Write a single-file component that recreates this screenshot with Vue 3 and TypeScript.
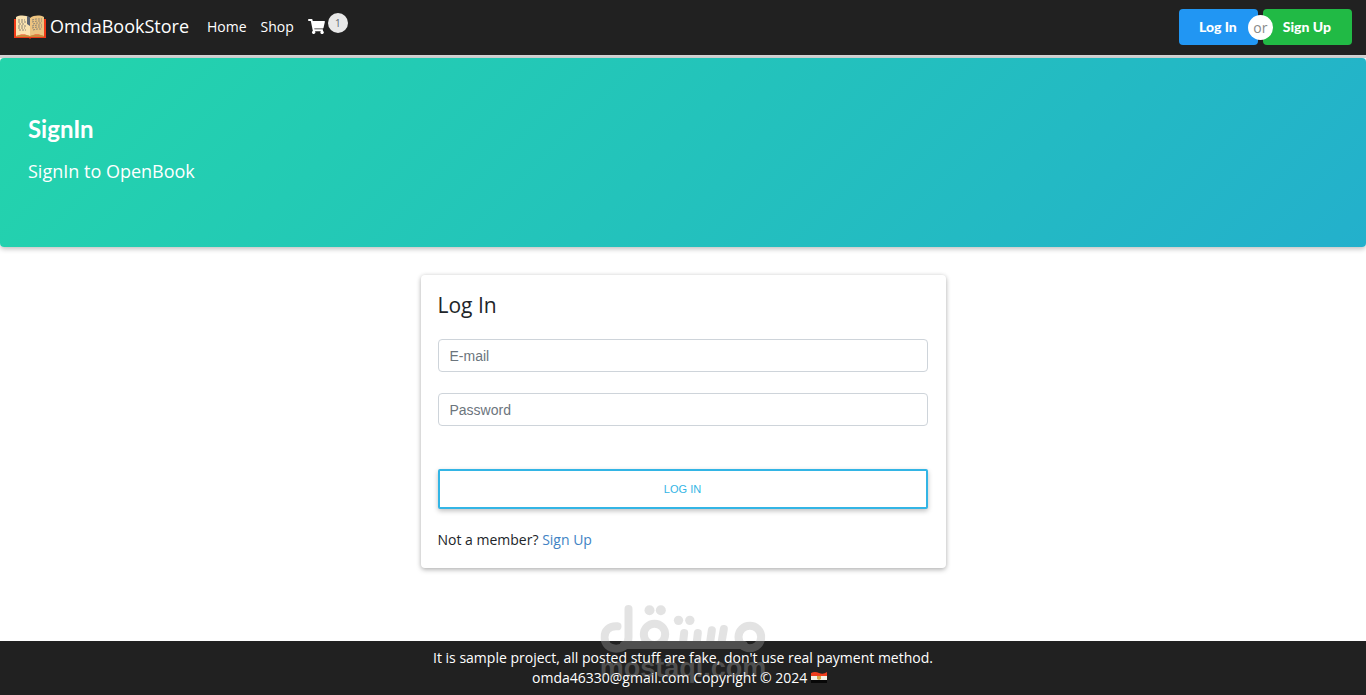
<script setup lang="ts">
import { ref } from 'vue'

const email = ref('')
const password = ref('')
const cartCount = ref(1)
</script>

<template>
  <div class="page">
    <header class="navbar">
      <a class="brand" href="#">
        <svg class="book" viewBox="0 0 32 24" aria-hidden="true">
          <path d="M0 4h32v19H17l-1 1-1-1H0z" fill="#f03a17" />
          <path d="M2 20h28v2H2z" fill="#c98a3c" />
          <path d="M2 2C6 0 12 0 16 3v18c-4-2-10-2-14 0z" fill="#fbe3b0" />
          <path d="M30 2C26 0 20 0 16 3v18c4-2 10-2 14 0z" fill="#edc481" />
          <path d="M13 1c1 0 2 1 3 2v8l-3-2z" fill="#59616f" />
          <path
            d="M4 5h7M4 7h8M5 9h6M4 11h8M4 13h7M5 15h7M18 5l4-1h6M18 7l5-1h5M19 9l4-1h5M18 11l5-1h5M18 13l5-1h5M19 15l4-1h5"
            fill="none" stroke="#8b8374" stroke-width="1" stroke-dasharray="2 1"
          />
        </svg>
        <span>OmdaBookStore</span>
      </a>
      <nav class="links">
        <a href="#">Home</a>
        <a href="#">Shop</a>
        <a class="cart" href="#" aria-label="Cart">
          <svg viewBox="0 0 576 512" aria-hidden="true">
            <path
              fill="currentColor"
              d="M528 301 575 93c4-15-8-29-23-29H159l-9-45C148 8 138 0 126 0H24C11 0 0 11 0 24v16c0 13 11 24 24 24h70l70 343a56 56 0 1 0 67 9h210a56 56 0 1 0 64-10l5-25c4-15-8-29-23-29H218l-7-32h294c11 0 21-8 23-19z"
            />
          </svg>
          <span class="badge">{{ cartCount }}</span>
        </a>
      </nav>
      <div class="auth">
        <button class="btn login" type="button">Log In</button>
        <span class="or">or</span>
        <button class="btn signup" type="button">Sign Up</button>
      </div>
    </header>

    <section class="hero">
      <h1>SignIn</h1>
      <p>SignIn to OpenBook</p>
    </section>

    <main class="content">
      <form class="card" @submit.prevent>
        <h2>Log In</h2>
        <input v-model="email" type="email" placeholder="E-mail" aria-label="E-mail" />
        <input v-model="password" type="password" placeholder="Password" aria-label="Password" />
        <button class="submit" type="submit">LOG IN</button>
        <p class="member">Not a member? <a href="#">Sign Up</a></p>
      </form>
    </main>

    <footer class="footer">
      <p>It is sample project, all posted stuff are fake, don't use real payment method.</p>
      <p>
        omda46330@gmail.com Copyright © 2024
        <svg class="flag" viewBox="0 0 16 11" role="img" aria-label="Egypt">
          <path d="M0 1Q4-1 8 1t8-1v4H0z" fill="#ef3e1d" />
          <path d="M0 4h16v4H0z" fill="#f4f1e6" />
          <path d="M0 8h16v3H0z" fill="#080808" />
          <path d="M6 4h4v3l-2 1-2-1z" fill="#d6a64b" />
        </svg>
      </p>
      <div class="watermark" aria-hidden="true">
        <svg viewBox="0 0 495 150">
          <g fill="none" stroke="currentColor" stroke-width="24" stroke-linecap="round">
            <path d="M51 64C25 62 12 78 12 97c0 21 15 34 35 34 22 0 37-13 37-34V12" />
            <path d="M70 120H430" />
            <circle cx="162" cy="88" r="32" />
            <circle cx="448" cy="96" r="34" />
            <path d="M251 84l-4 34M292 84l-4 34M334 76l-6 42M370 72l-8 46" />
          </g>
          <g fill="currentColor">
            <circle cx="147" cy="16" r="15" />
            <circle cx="181" cy="16" r="15" />
            <circle cx="234" cy="46" r="14" />
            <circle cx="268" cy="46" r="14" />
          </g>
        </svg>
        <span>mostaql.com</span>
      </div>
    </footer>
  </div>
</template>

<style>
body {
  margin: 0;
}
</style>

<style scoped>
* {
  box-sizing: border-box;
}

.page {
  display: flex;
  flex-direction: column;
  min-height: 100vh;
  background: #fff;
  color: #212529;
  font: 14px/20px "Open Sans", sans-serif;
}

h1,
h2,
p {
  margin: 0;
}

a {
  text-decoration: none;
}

.navbar {
  display: flex;
  align-items: center;
  height: 58px;
  padding: 0 14px 2px;
  background: #212121;
  border-bottom: 3px solid #d4d4d5;
}

.navbar a {
  color: #fff;
}

.brand {
  display: flex;
  align-items: center;
  gap: 4px;
  font-size: 18px;
  line-height: 24px;
}

.brand span {
  padding-bottom: 2px;
}

.book {
  width: 32px;
  height: 24px;
}

.links {
  display: flex;
  align-items: center;
  gap: 14px;
  margin-left: 18px;
}

.cart {
  display: flex;
  align-items: center;
  gap: 3px;
}

.cart svg {
  width: 17px;
  height: 15px;
}

.badge {
  width: 20px;
  height: 20px;
  margin-bottom: 8px;
  border-radius: 50%;
  background: #e8e8e8;
  color: #5c6670;
  font-size: 10px;
  line-height: 20px;
  text-align: center;
}

.auth {
  display: flex;
  position: relative;
  gap: 5px;
  margin-left: auto;
}

.btn {
  height: 36px;
  padding: 0 21px 0 20px;
  border: 0;
  border-radius: 4px;
  color: #fff;
  font: 900 14px/20px Lato, sans-serif;
  cursor: pointer;
}

.login {
  background: #2196f3;
}

.signup {
  background: #21ba45;
}

.or {
  position: absolute;
  top: 6px;
  left: 69px;
  width: 25px;
  height: 25px;
  border-radius: 50%;
  background: #fff;
  color: #8a8a8a;
  line-height: 26px;
  text-align: center;
}

.hero {
  padding: 56px 28px 64px;
  border-radius: 4px;
  background: linear-gradient(135deg, #23d5ab, #23b0cc);
  box-shadow: 0 2px 5px rgba(0, 0, 0, 0.25);
  color: #fff;
}

.hero h1 {
  font: 700 24px/30px Lato, sans-serif;
}

.hero p {
  margin-top: 15px;
  font-size: 18px;
  line-height: 24px;
}

.content {
  display: flex;
  justify-content: center;
  flex: 1;
  padding: 28px 16px;
}

.card {
  display: flex;
  flex-direction: column;
  align-self: flex-start;
  width: 100%;
  max-width: 525px;
  padding: 16px 18px 18px 17px;
  border-radius: 4px;
  box-shadow: 0 2px 5px rgba(0, 0, 0, 0.25), 0 0 4px rgba(0, 0, 0, 0.1);
}

.card h2 {
  margin-bottom: 20px;
  font-size: 21px;
  font-weight: 400;
  line-height: 28px;
}

.card input {
  height: 33px;
  margin-bottom: 21px;
  padding: 0 11px;
  border: 1px solid #ced4da;
  border-radius: 4px;
  background: #fff;
  font: 14px/20px "Liberation Sans", Arial, sans-serif;
}

.card input::placeholder {
  color: #6c757d;
  opacity: 1;
}

.submit {
  height: 40px;
  margin-top: 22px;
  border: 2px solid #33b5e5;
  border-radius: 2px;
  background: #fff;
  box-shadow: 0 2px 5px rgba(0, 0, 0, 0.25);
  color: #33b5e5;
  font: 500 11px/20px "Liberation Sans", Arial, sans-serif;
  cursor: pointer;
}

.member {
  margin-top: 21px;
}

.member a {
  color: #4183c4;
}

.footer {
  position: relative;
  padding: 7px 16px;
  background: #212121;
  color: #fff;
  text-align: center;
}

.flag {
  width: 16px;
  height: 11px;
  margin-right: 7px;
}

.watermark {
  display: flex;
  flex-direction: column;
  align-items: center;
  position: absolute;
  bottom: 14px;
  left: 50%;
  width: 165px;
  transform: translateX(-50%);
  color: #adadad;
  opacity: 0.33;
  pointer-events: none;
}

.watermark svg {
  width: 165px;
  height: 50px;
}

.watermark span {
  font: 700 27px/26px "Liberation Sans", Arial, sans-serif;
}
</style>
